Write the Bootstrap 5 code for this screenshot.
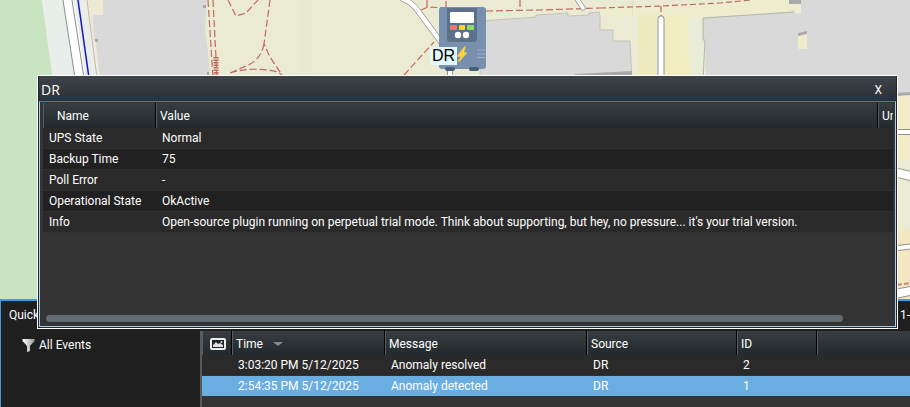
<!DOCTYPE html>
<html lang="en">
<head>
<meta charset="utf-8">
<meta name="viewport" content="width=device-width, initial-scale=1">
<title>DR – map details</title>
<link href="https://cdn.jsdelivr.net/npm/bootstrap@5.3.0/dist/css/bootstrap.min.css" rel="stylesheet">
<style>
body{font-family:Roboto,"Liberation Sans",Arial,sans-serif;font-size:12px;line-height:20px;color:#fff;background:#202020}
.map-pane{min-height:0}
.map-pane svg.map-art{width:100%;height:100%}
.device{left:430px;top:7px;width:56px;height:64px}
.device-label{left:0;top:40px;padding:0 2px;background:#e3f8fd;color:#000;font-family:"Liberation Sans",Arial,sans-serif;font-size:16px;line-height:18px}
.events{border-top:2px solid #3d9be9;border-left:1px solid #3d9be9;background:#1f1f1f}
.events-title{padding:4px 0 6px 8px}
.tree{width:201px;border-right:2px solid #57595b;padding:4px 0 0 21px}
.tree a{color:#fff;gap:4px}
.grid-pane{background:#343434;padding-bottom:10px;min-width:0}
.grid-table{table-layout:fixed;border-collapse:separate;border-spacing:0;width:100%}
.grid-table th{height:24px;padding:1px 0 0 3px;font-weight:400;background:linear-gradient(#373d40,#222a2e);border-right:1px solid #000;border-left:1px solid #585d60}
.grid-table th:last-child{border-right:0}
.grid-table td{height:21px;padding:0 0 0 6px;background:#2a2a2a;border-bottom:1px solid #313131;white-space:nowrap;overflow:hidden}
.grid-table th,.grid-table td{line-height:20px}
.events-table .selected td{background:#69ade1;border-color:#343434}
.sort-mark{margin-left:10px}
.details{left:37px;right:12px;top:75px;bottom:78px;background:#20262b;border:1px solid #fff;padding:0 1px 1px}
.details-title{height:25px;padding:2px 14px 0 2px;background:linear-gradient(#3e4448,#2a3035);font-size:14px}
.details-title h1{font-family:"Open Sans","Segoe UI",sans-serif;font-size:14px;line-height:24px;font-weight:400}
.details-title button{color:#fff;background:none;border:0;padding:0;font-size:12px;line-height:20px}
.details-body{min-height:0;background:#343434;border:1px solid #a9cfe8;border-top-color:#4e7ba3;padding:1px 2px 4px 3px}
.details-table{width:915px}
.details-table th{height:25px}
.details-table th:first-child{padding-left:13px}
.details-table td:first-child{padding-left:6px}
.details-table tr:nth-child(even) td{background:#212121}
.scroll-thumb{height:7px;border-radius:4px;background:#616b70;margin:0 50px 0 3px}
</style>
<script src="https://cdn.jsdelivr.net/npm/bootstrap@5.3.0/dist/js/bootstrap.bundle.min.js"></script>
</head>
<body>
<div class="position-relative d-flex flex-column vh-100 overflow-hidden">
  <main class="map-pane position-relative flex-grow-1 overflow-hidden">
    <svg class="map-art d-block" viewBox="0 0 910 299" preserveAspectRatio="xMinYMin slice" role="img" aria-label="Street map">
      <rect width="910" height="299" fill="#ebead2"/>
      <path d="M0 0H42L52 75L80 299H0Z" fill="#c9e4c1"/>
      <path d="M42 0H88L100 80H53Z" fill="#e8eee9"/>
      <path d="M63 0H74L86 80H75Z" fill="#fff"/>
      <path d="M63 0L75 78M72 0L84 78" stroke="#8c8c8c" fill="none"/>
      <path d="M78 0L89 78" stroke="#1414c8" stroke-width="1.5"/>
      <path d="M87 0L97 78" stroke="#d9b49a"/>
      <path d="M103 0H207L205 30L208 52L210 80H100L96 42H98V40H94L93 15H103Z" fill="#d9d9d9"/>
      <path d="M95 39h3v3h-3zM203 5h3v3h-3zM207 72h2v4h-2z" fill="#aaa"/>
      <path d="M300 0H311L308 80H300Z" fill="#e9ebd0"/>
      <g fill="none" stroke="#c26a62" stroke-width="1.200" stroke-dasharray="7 3">
        <path d="M208 0L213 78M213 0L217 78"/>
        <path d="M228 0L236 16L246 13L258 0M270 0L264 44L270 57L282 75"/>
        <path d="M264 44Q261 60 246 66L230 73M230 73Q254 66 278 72L282 75"/>
        <path d="M404 75L434 42M421 10L428 7L446 8M427 0V8M446 8V0M486 11L540 10L600 8M520 0V10"/>
      </g>
      <path d="M216 57v18" stroke="#c26a62" stroke-width="5" stroke-dasharray="1.5 1"/>
      <path d="M401 -2Q413 3 418 11L441 42" fill="none" stroke="#9b9b94" stroke-width="6"/>
      <path d="M401 -2Q413 3 418 11L441 42" fill="none" stroke="#fff" stroke-width="4.5"/>
      <path d="M577 -1L583 8" stroke="#9b9b94" stroke-width="5" stroke-linecap="round"/>
      <path d="M577 -1L583 8" stroke="#fff" stroke-width="3.5" stroke-linecap="round"/>
      <path d="M450 68v10" stroke="#999" stroke-width="6"/><path d="M450 68v10" stroke="#fff" stroke-width="4"/>
      <path d="M480 21L536 17V15L568 13V16L589 15V13L600 12V30H613V41H630L632 80H480Z" fill="#d9d9d9" stroke="#b7b7b3" stroke-width=".7"/>
      <path d="M575 74L632 71V75H575Z" fill="#a9a9a9"/>
      <path d="M600 9L740 2L780 0V20H633L632 15H600Z" fill="#eeedce"/>
      <path d="M740 0H790V13L702 18V10Z" fill="#eeedce"/>
      <path d="M632 15V80H707L702 18Z" fill="#e9ecd6"/>
      <path d="M638 15H656V80H638Z" fill="#f0ebbe"/><path d="M664 15H687L691 80H664Z" fill="#f2edc0"/>
      <path d="M632.500 0V15" stroke="#dedfd5"/>
      <path d="M661 19V80" stroke="#97958a" stroke-width="7" stroke-linecap="round"/>
      <path d="M661 19V80" stroke="#fff" stroke-width="5" stroke-linecap="round"/>
      <path d="M703 18L794 12L800 14H910V94H706L705 40H703Z" fill="#d9d9d9"/>
      <path d="M789 0H910V15H800L789 9Z" fill="#d9d9d9"/>
      <path d="M600 8L661 6L720 3L751 0M661 6V16" stroke="#c26a62" fill="none" stroke-width="1.200" stroke-dasharray="6 3"/>
      <path d="M703 80L705 40H703V18L794 12" fill="none" stroke="#aaa99e" stroke-width=".8"/>
      <path d="M789 2H801V14L795 13V11L789 9Z" fill="#eeedcf"/><path d="M789 0H801V4H789Z" fill="#aaa"/>
      <path d="M798 33L807 31V49H798Z" fill="#edebcb"/><path d="M798 33L807 31V34L798 36Z" fill="#aaa"/>
      <path d="M897 97H910V160H897Z" fill="#f2edc8"/><path d="M897 93L910 92V95L897 96Z" fill="#aaa"/>
      <path d="M897 231L910 228V299H897Z" fill="#f1e8c2"/>
      <path d="M890 132H915M890 249L915 246" stroke="#929187" stroke-width="6"/>
      <path d="M890 171L915 177M890 295L915 290" stroke="#929187" stroke-width="10"/>
      <path d="M890 132H915M890 249L915 246" stroke="#fff" stroke-width="4"/>
      <path d="M890 171L915 177M890 295L915 290" stroke="#fff" stroke-width="8"/>
      <path d="M897 285L910 283" stroke="#c58b7c" stroke-width="2" stroke-dasharray="5 2"/>
    </svg>
    <div class="device position-absolute">
      <svg class="d-block" width="56" height="64" viewBox="0 0 56 64" aria-hidden="true">
        <rect x="9" width="47" height="62" rx="3" fill="#7890ae"/>
        <rect x="15" y="60" width="10" height="4" rx="2" fill="#4a6078"/><rect x="39" y="60" width="10" height="4" rx="2" fill="#4a6078"/>
        <path d="M17 1H47V32Q47 35 44 35H20Q17 35 17 32Z" fill="#5b7089"/>
        <rect x="20" y="5" width="24" height="11" rx="1" fill="#fff"/>
        <rect x="20" y="18" width="7" height="5" rx="1" fill="#ff6e76"/><rect x="29" y="18" width="6" height="5" rx="1" fill="#ffd02f"/><rect x="37" y="18" width="7" height="5" rx="1" fill="#89df67"/>
        <circle cx="28" cy="28" r="3.200" fill="#fff"/><circle cx="36" cy="28" r="3.200" fill="#fff"/>
        <path d="M35 40L28 49H32L29 54L36 46H33Z" fill="#ffd23c" stroke="#ffd23c" stroke-width="1.500" stroke-linejoin="round"/>
        <path d="M47 43h9M47 47h9M47 50.500h9" stroke="#9cafc6"/>
      </svg>
      <span class="device-label position-absolute">DR</span>
    </div>
  </main>

  <section class="events flex-shrink-0">
    <div class="events-title d-flex justify-content-between"><span>Quick</span><span>1-</span></div>
    <div class="d-flex">
      <nav class="tree flex-shrink-0" aria-label="Filters">
        <a href="#" class="d-flex align-items-center text-decoration-none">
          <svg width="13" height="13" viewBox="0 0 13 13" aria-hidden="true"><defs><linearGradient id="funnel"><stop stop-color="#fff"/><stop offset="1" stop-color="#999"/></linearGradient></defs><path d="M.5 0H12.500V2L8 7V12L5 13V7L.5 2Z" fill="url(#funnel)"/></svg>
          All Events
        </a>
      </nav>
      <div class="grid-pane flex-grow-1">
        <table class="grid-table events-table">
          <colgroup><col style="width:30px"><col style="width:153px"><col style="width:202px"><col style="width:150px"><col style="width:80px"><col></colgroup>
          <thead><tr>
            <th aria-label="Picture"><svg class="d-block ms-1" width="16" height="12" viewBox="0 0 16 12" aria-hidden="true"><rect x="1" y="1" width="14" height="10" rx="1" fill="#1f2427" stroke="#eee" stroke-width="2"/><path d="M3 9V7L6 4L8 6L10 5L13 7V9Z" fill="#ddd"/><circle cx="11.500" cy="4" r="1" fill="#ddd"/></svg></th>
            <th>Time<svg class="sort-mark" width="10" height="4" viewBox="0 0 10 4" aria-hidden="true"><path d="M0 0H10L5 4Z" fill="#858a8d"/></svg></th>
            <th>Message</th><th>Source</th><th>ID</th><th></th>
          </tr></thead>
          <tbody>
            <tr><td></td><td>3:03:20 PM 5/12/2025</td><td>Anomaly resolved</td><td>DR</td><td>2</td><td></td></tr>
            <tr class="selected"><td></td><td>2:54:35 PM 5/12/2025</td><td>Anomaly detected</td><td>DR</td><td>1</td><td></td></tr>
          </tbody>
        </table>
      </div>
    </div>
  </section>

  <section class="details position-absolute d-flex flex-column" role="dialog" aria-labelledby="details-name">
    <header class="details-title d-flex align-items-center justify-content-between"><h1 id="details-name" class="m-0">DR</h1><button type="button" aria-label="Close">X</button></header>
    <div class="details-body flex-grow-1 d-flex flex-column justify-content-between overflow-hidden">
      <div class="overflow-hidden">
        <table class="grid-table details-table">
          <colgroup><col style="width:113px"><col style="width:722px"><col></colgroup>
          <thead><tr><th>Name</th><th>Value</th><th>Unit</th></tr></thead>
          <tbody>
            <tr><td>UPS State</td><td>Normal</td><td></td></tr>
            <tr><td>Backup Time</td><td>75</td><td></td></tr>
            <tr><td>Poll Error</td><td>-</td><td></td></tr>
            <tr><td>Operational State</td><td>OkActive</td><td></td></tr>
            <tr><td>Info</td><td>Open-source plugin running on perpetual trial mode. Think about supporting, but hey, no pressure... it's your trial version.</td><td></td></tr>
          </tbody>
        </table>
      </div>
      <div class="scroll-thumb"></div>
    </div>
  </section>
</div>
</body>
</html>
